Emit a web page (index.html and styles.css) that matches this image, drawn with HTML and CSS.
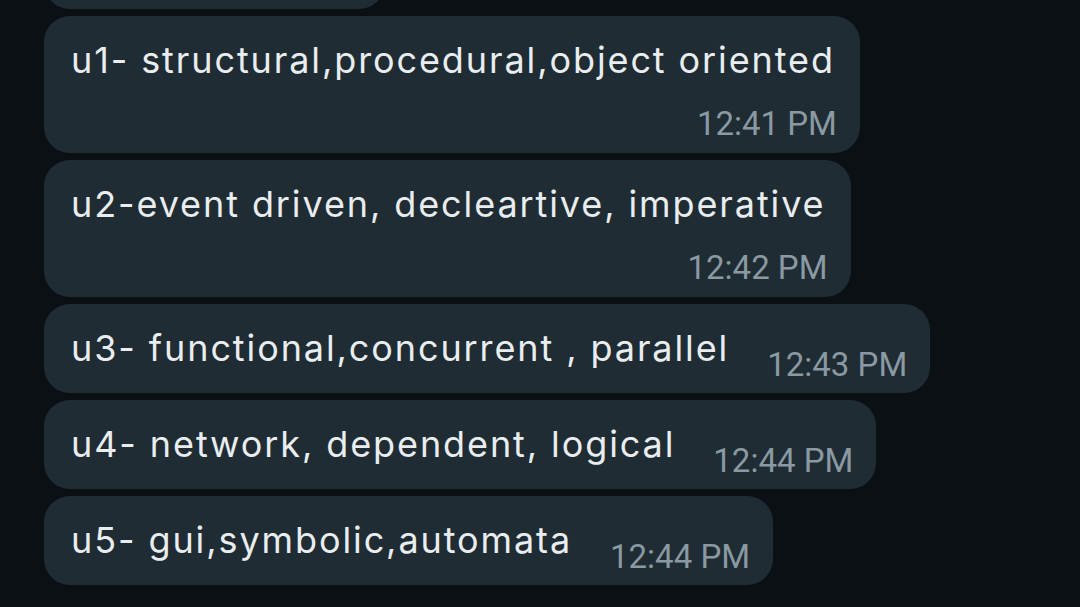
FILE: index.html
```html
<!DOCTYPE html>
<html lang="en">
<head>
<meta charset="utf-8">
<title>Chat</title>
<link rel="stylesheet" href="styles.css">
</head>
<body>
<main class="chat">
  <div class="bubble bubble-cut"></div>

  <div class="bubble stacked">
    <span class="text">u1- structural,procedural,object oriented</span>
    <span class="time">12:41 PM</span>
  </div>

  <div class="bubble stacked">
    <span class="text">u2-event driven, decleartive, imperative</span>
    <span class="time">12:42 PM</span>
  </div>

  <div class="bubble inline">
    <span class="text">u3- functional,concurrent , parallel</span>
    <span class="time">12:43 PM</span>
  </div>

  <div class="bubble inline">
    <span class="text">u4- network, dependent, logical</span>
    <span class="time">12:44 PM</span>
  </div>

  <div class="bubble inline">
    <span class="text">u5- gui,symbolic,automata</span>
    <span class="time">12:44 PM</span>
  </div>
</main>
</body>
</html>
```

FILE: styles.css
```css
html, body {
  margin: 0;
  padding: 0;
  background: #0b1014;
  height: 100%;
  overflow: hidden;
}

body {
  font-family: Roboto, "Noto Sans", "Liberation Sans", sans-serif;
}

.chat {
  display: flex;
  flex-direction: column;
  align-items: flex-start;
  gap: 7px;
  padding-left: 44px;
  margin-top: -71px;
}

.bubble {
  background: #1f2c33;
  border-radius: 26px;
  padding: 22px 23px 9px 27px;
  box-sizing: border-box;
}

.bubble-cut {
  width: 341px;
  height: 80px;
  padding: 0;
}

.text {
  color: #e9edef;
  font-family: Inter, Roboto, sans-serif;
  font-size: 36px;
  letter-spacing: 1.9px;
  line-height: 44px;
  white-space: nowrap;
}

.time {
  color: #8a99a2;
  font-family: Roboto, sans-serif;
  font-size: 33px;
  line-height: 38px;
  white-space: nowrap;
}

.stacked {
  display: flex;
  flex-direction: column;
  padding-bottom: 10px;
}

.stacked .text {
  padding-right: 2px;
}

.stacked .time {
  align-self: flex-end;
  margin-top: 23px;
}

.inline {
  display: flex;
  align-items: flex-start;
  gap: 38px;
}

.inline .time {
  margin-top: 20px;
}
```
